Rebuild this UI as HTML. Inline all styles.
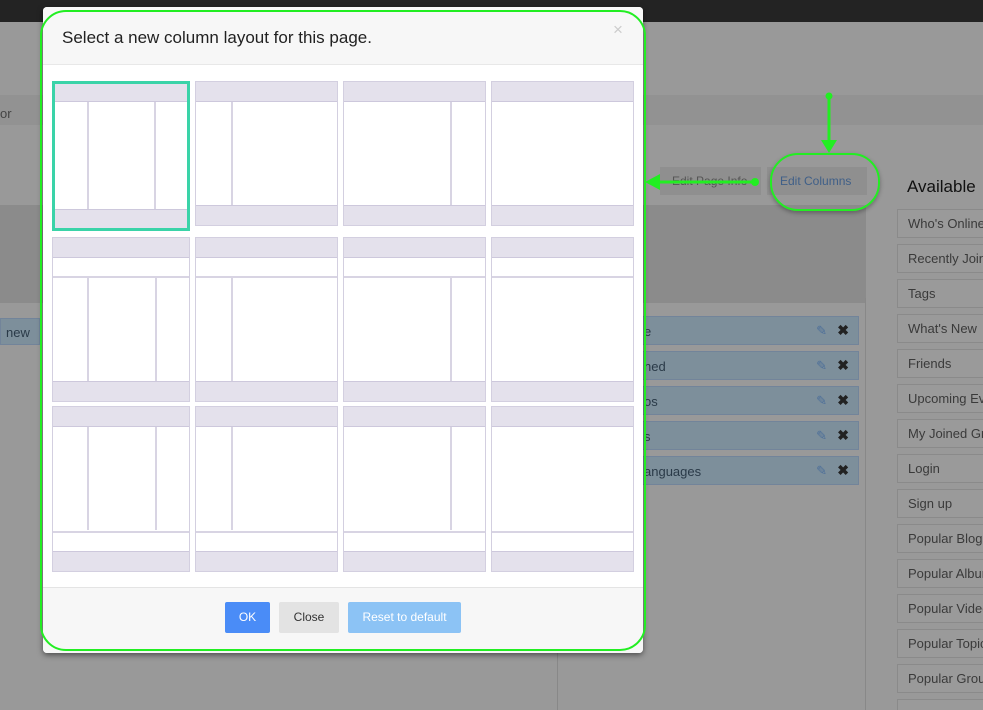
<!DOCTYPE html>
<html style="overflow:hidden;width:983px;height:710px"><head><style>
*{box-sizing:border-box;margin:0;padding:0}
body{width:983px;height:710px;overflow:hidden;background:#999;font-family:"Liberation Sans",Arial,sans-serif;position:relative}
.a{position:absolute}
.side{position:absolute;left:897px;width:90px;height:29px;border:1px solid #8a8a8a;background:#9a9a9a;color:#3a3a3a;font-size:13px;padding:6px 0 0 10px;white-space:nowrap;overflow:hidden}
.blue{position:absolute;left:600px;width:259px;height:29px;background:#7d8f9b;border:1px solid #72849a;color:#2a3a48;font-size:13px;padding:7px 0 0 0}
.blue .p{position:absolute;right:31px;top:6px;color:#4d6f99;font-size:13px}
.blue .x{position:absolute;right:9px;top:5px;color:#222;font-size:14px;font-weight:bold}
.t{position:absolute;background:#fff;border:1px solid #d3cfe0}
.t div{position:absolute}
.h{left:0;right:0;background:#e4e1ec;border-bottom:1px solid #cdc8dc}
.f{left:0;right:0;background:#e4e1ec;border-top:1px solid #cdc8dc}
.v{top:0;bottom:0;width:2px;background:#d8d4e3}
.hl{left:0;right:0;height:2px;background:#d8d4e3}
.btn{position:absolute;top:602px;height:31px;border-radius:2px;font-size:12px;text-align:center;line-height:31px}
</style></head><body>
<div class="a" style="left:0;top:0;width:983px;height:22px;background:#232323"></div>
<div class="a" style="left:0;top:95px;width:983px;height:30px;background:#929292"></div>
<div class="a" style="left:0;top:106px;font-size:13px;color:#444">or</div>
<div class="a" style="left:0;top:205px;width:866px;height:98px;background:#8b8b8b"></div>
<div class="a" style="left:0;top:318px;width:40px;height:27px;background:#7d8f9b;border:1px solid #72849a;font-size:13px;color:#2a3a48;padding:6px 0 0 5px">new</div>
<div class="a" style="left:557px;top:303px;width:1px;height:407px;background:#888"></div>
<div class="a" style="left:865px;top:298px;width:1px;height:412px;background:#888"></div>
<div class="a" style="left:660px;top:167px;width:101px;height:28px;background:#8f8f8f"></div>
<div class="a" style="left:672px;top:174px;font-size:12px;color:#555">Edit Page Info</div>
<div class="a" style="left:767px;top:167px;width:100px;height:28px;background:#8f8f8f;font-size:12px;color:#3f5f88;padding:7px 0 0 13px">Edit Columns</div>
<div class="a" style="left:907px;top:177px;font-size:17px;color:#111">Available</div>
<div class="side" style="top:209px">Who's Online</div>
<div class="side" style="top:244px">Recently Joined</div>
<div class="side" style="top:279px">Tags</div>
<div class="side" style="top:314px">What's New</div>
<div class="side" style="top:349px">Friends</div>
<div class="side" style="top:384px">Upcoming Events</div>
<div class="side" style="top:419px">My Joined Groups</div>
<div class="side" style="top:454px">Login</div>
<div class="side" style="top:489px">Sign up</div>
<div class="side" style="top:524px">Popular Blogs</div>
<div class="side" style="top:559px">Popular Albums</div>
<div class="side" style="top:594px">Popular Videos</div>
<div class="side" style="top:629px">Popular Topics</div>
<div class="side" style="top:664px">Popular Groups</div>
<div class="side" style="top:699px;height:11px;border-bottom:none"></div>
<div class="blue" style="top:316px"><span style="padding-left:43px">e</span><span class="p">✎</span><span class="x">✖</span></div>
<div class="blue" style="top:351px"><span style="padding-left:43px">ned</span><span class="p">✎</span><span class="x">✖</span></div>
<div class="blue" style="top:386px"><span style="padding-left:43px">os</span><span class="p">✎</span><span class="x">✖</span></div>
<div class="blue" style="top:421px"><span style="padding-left:43px">s</span><span class="p">✎</span><span class="x">✖</span></div>
<div class="blue" style="top:456px"><span style="padding-left:43px">anguages</span><span class="p">✎</span><span class="x">✖</span></div>

<!-- modal -->
<div class="a" style="left:43px;top:7px;width:600px;height:646px;background:#fff;box-shadow:0 2px 6px rgba(0,0,0,.5);overflow:hidden;border-radius:4px">
 <div class="a" style="left:0;top:0;width:600px;height:58px;background:#f7f7f7;border-bottom:1px solid #e8e8e8"></div>
 <div class="a" style="left:19px;top:21px;font-size:17px;color:#222">Select a new column layout for this page.</div>
 <div class="a" style="left:570px;top:13px;font-size:17px;color:#ccc">×</div>
 <div class="a" style="left:0;top:580px;width:600px;height:66px;background:#f7f7f7;border-top:1px solid #e4e4e4"></div>
</div>

<!-- row1 -->
<div class="t" style="left:52px;top:81px;width:138px;height:150px;border:3px solid #3ad3a8"><div class="h" style="top:0;height:18px"></div><div class="v" style="left:32px;top:18px;bottom:18px"></div><div class="v" style="left:99px;top:18px;bottom:18px"></div><div class="f" style="bottom:0;height:19px"></div></div>
<div class="t" style="left:195px;top:81px;width:143px;height:145px"><div class="h" style="top:0;height:20px"></div><div class="v" style="left:35px;top:20px;bottom:20px"></div><div class="f" style="bottom:0;height:20px"></div></div>
<div class="t" style="left:343px;top:81px;width:143px;height:145px"><div class="h" style="top:0;height:20px"></div><div class="v" style="left:106px;top:20px;bottom:20px"></div><div class="f" style="bottom:0;height:20px"></div></div>
<div class="t" style="left:491px;top:81px;width:143px;height:145px"><div class="h" style="top:0;height:20px"></div><div class="f" style="bottom:0;height:20px"></div></div>
<!-- row2 -->
<div class="t" style="left:52px;top:237px;width:138px;height:165px"><div class="h" style="top:0;height:20px"></div><div class="hl" style="top:38px"></div><div class="v" style="left:34px;top:39px;bottom:20px"></div><div class="v" style="left:102px;top:39px;bottom:20px"></div><div class="f" style="bottom:0;height:20px"></div></div>
<div class="t" style="left:195px;top:237px;width:143px;height:165px"><div class="h" style="top:0;height:20px"></div><div class="hl" style="top:38px"></div><div class="v" style="left:35px;top:39px;bottom:20px"></div><div class="f" style="bottom:0;height:20px"></div></div>
<div class="t" style="left:343px;top:237px;width:143px;height:165px"><div class="h" style="top:0;height:20px"></div><div class="hl" style="top:38px"></div><div class="v" style="left:106px;top:39px;bottom:20px"></div><div class="f" style="bottom:0;height:20px"></div></div>
<div class="t" style="left:491px;top:237px;width:143px;height:165px"><div class="h" style="top:0;height:20px"></div><div class="hl" style="top:38px"></div><div class="f" style="bottom:0;height:20px"></div></div>
<!-- row3 -->
<div class="t" style="left:52px;top:406px;width:138px;height:166px"><div class="h" style="top:0;height:20px"></div><div class="hl" style="top:124px"></div><div class="v" style="left:34px;top:20px;bottom:41px"></div><div class="v" style="left:102px;top:20px;bottom:41px"></div><div class="f" style="bottom:0;height:20px"></div></div>
<div class="t" style="left:195px;top:406px;width:143px;height:166px"><div class="h" style="top:0;height:20px"></div><div class="hl" style="top:124px"></div><div class="v" style="left:35px;top:20px;bottom:41px"></div><div class="f" style="bottom:0;height:20px"></div></div>
<div class="t" style="left:343px;top:406px;width:143px;height:166px"><div class="h" style="top:0;height:20px"></div><div class="hl" style="top:124px"></div><div class="v" style="left:106px;top:20px;bottom:41px"></div><div class="f" style="bottom:0;height:20px"></div></div>
<div class="t" style="left:491px;top:406px;width:143px;height:166px"><div class="h" style="top:0;height:20px"></div><div class="hl" style="top:124px"></div><div class="f" style="bottom:0;height:20px"></div></div>

<div class="btn" style="left:225px;width:45px;background:#4a8cf7;color:#fff">OK</div>
<div class="btn" style="left:279px;width:60px;background:#e3e3e3;color:#333">Close</div>
<div class="btn" style="left:348px;width:113px;background:#8cc3f5;color:#fff">Reset to default</div>

<!-- annotations -->
<div class="a" style="left:40px;top:10px;width:606px;height:641px;border:2px solid #22ee22;border-radius:26px"></div>
<div class="a" style="left:770px;top:153px;width:110px;height:58px;border:2px solid #22ee22;border-radius:28px;box-shadow:0 2px 4px rgba(0,0,0,.3)"></div>
<svg class="a" style="left:0;top:0" width="983" height="710">
 <line x1="829" y1="96" x2="829" y2="142" stroke="#22ee22" stroke-width="3"/>
 <circle cx="829" cy="96" r="3.5" fill="#22ee22"/>
 <polygon points="821,140 837,140 829,153" fill="#22ee22"/>
 <line x1="658" y1="182" x2="755" y2="182" stroke="#22ee22" stroke-width="3"/>
 <circle cx="755" cy="182" r="4" fill="#22ee22"/>
 <polygon points="645,182 660,174 660,190" fill="#22ee22"/>
</svg>
</body></html>
